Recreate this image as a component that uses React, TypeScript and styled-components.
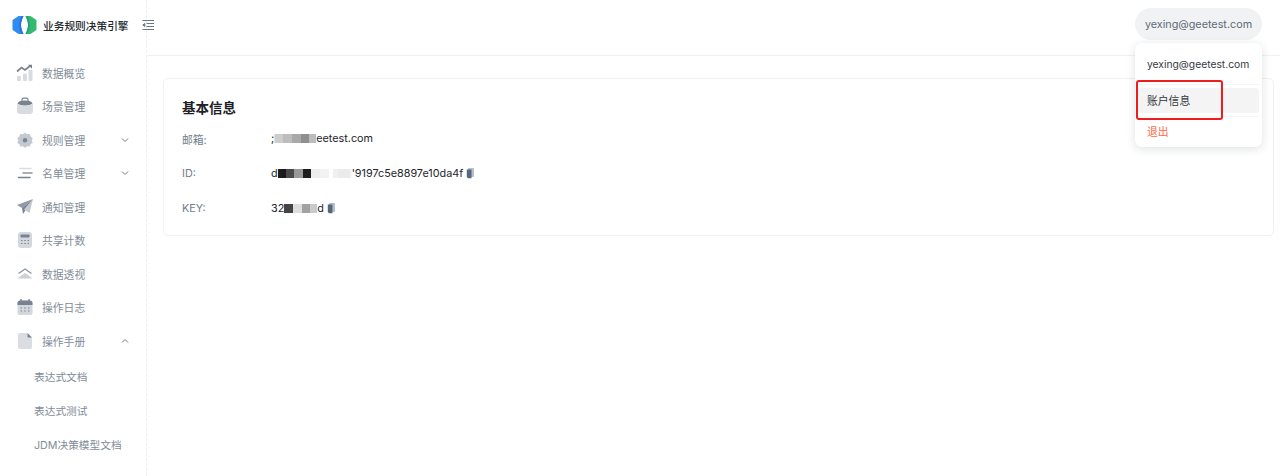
import React from "react";
import styled, { createGlobalStyle } from "styled-components";

const GlobalStyle = createGlobalStyle`
  html, body { margin: 0; padding: 0; background: #fff; }
  body { font-family: Inter, "Noto Sans CJK SC", sans-serif; color: #1f2329; }
`;

const Page = styled.div`
  display: flex;
  width: 1280px;
  height: 476px;
  overflow: hidden;
  position: relative;
`;

const Sidebar = styled.aside`
  width: 146px;
  flex-shrink: 0;
  border-right: 1px dashed #eceef0;
  display: flex;
  flex-direction: column;
`;

const Brand = styled.div`
  display: flex;
  align-items: center;
  height: 50px;
  padding-left: 12px;

  svg {
    flex-shrink: 0;
  }
`;

const BrandName = styled.span`
  margin-left: 6px;
  font-size: 10.7px;
  font-weight: 500;
  color: #23282f;
  white-space: nowrap;
`;

const CollapseBtn = styled.span`
  display: flex;
  margin-left: 13px;
  flex-shrink: 0;
`;

const Menu = styled.nav`
  display: flex;
  flex-direction: column;
  padding-top: 6px;
`;

const MenuItem = styled.div`
  display: flex;
  align-items: center;
  height: 33.5px;
  padding-left: 16px;
  padding-right: 17px;
`;

const IconSlot = styled.span`
  width: 18px;
  height: 18px;
  display: flex;
  align-items: center;
  justify-content: center;
  flex-shrink: 0;
`;

const MenuLabel = styled.span`
  margin-left: 8px;
  flex: 1;
  font-size: 10.8px;
  color: #818c98;
  white-space: nowrap;
`;

const SubMenu = styled.div`
  display: flex;
  flex-direction: column;
  padding-top: 2px;
`;

const SubItem = styled.div`
  height: 34px;
  display: flex;
  align-items: center;
  padding-left: 34px;
  font-size: 10.7px;
  color: #818c98;
  white-space: nowrap;
`;

const Main = styled.main`
  flex: 1;
  display: flex;
  flex-direction: column;
  min-width: 0;
`;

const Header = styled.header`
  height: 56px;
  box-sizing: border-box;
  border-bottom: 1px solid #f0f1f2;
  display: flex;
  justify-content: flex-end;
  padding: 8px 18px 0 0;
`;

const UserPill = styled.div`
  height: 32px;
  width: 127px;
  border-radius: 16px;
  background: #f0f2f4;
  color: #5f6b78;
  font-size: 10.8px;
  display: flex;
  align-items: center;
  justify-content: center;
`;

const Content = styled.div`
  padding: 22px 6px 0 16px;
`;

const Card = styled.section`
  height: 158px;
  box-sizing: border-box;
  border: 1px solid #f0f1f2;
  border-radius: 5px;
  padding: 20px 18px 0;
`;

const CardTitle = styled.h2`
  margin: 0 0 4px;
  font-size: 13.5px;
  line-height: 18px;
  font-weight: 600;
  color: #1d2127;
`;

const InfoRow = styled.div`
  display: flex;
  align-items: center;
  height: 35px;
  font-size: 10.8px;
`;

const InfoLabel = styled.span`
  width: 89px;
  color: #727d89;
`;

const InfoValue = styled.span`
  display: flex;
  align-items: center;
  color: #22262c;
  white-space: nowrap;
`;

const Mosaic = styled.span<{ $shade: string; $w: number }>`
  display: inline-block;
  width: ${({ $w }) => $w}px;
  height: 9px;
  background: ${({ $shade }) => $shade};
`;

const CopyIcon = styled.svg`
  margin-left: 3px;
`;

const Dropdown = styled.div`
  position: absolute;
  left: 1135px;
  top: 43px;
  width: 127px;
  height: 104px;
  background: #fff;
  border-radius: 7px;
  box-shadow: 0 2px 10px rgba(30, 40, 55, 0.14);
  display: flex;
  flex-direction: column;
  padding: 0 3px;
  box-sizing: border-box;
  font-size: 10.3px;
`;

const DropEmail = styled.div`
  height: 41px;
  display: flex;
  align-items: center;
  padding-left: 9px;
  color: #343a42;
  border-bottom: 1px solid #f5f5f6;
`;

const DropItem = styled.div`
  margin-top: 3px;
  height: 25px;
  display: flex;
  align-items: center;
  padding: 0 0 1px 9px;
  box-sizing: border-box;
  background: #f4f4f4;
  border-radius: 3px;
  font-size: 10.8px;
  color: #33383f;
`;

const DropDanger = styled.div`
  margin-top: 3px;
  border-top: 1px solid #f5f5f6;
  height: 28px;
  display: flex;
  align-items: center;
  padding-left: 9px;
  font-size: 10.8px;
  color: #ff6a45;
`;

const Highlight = styled.div`
  position: absolute;
  left: 1136px;
  top: 80px;
  width: 87px;
  height: 40px;
  box-sizing: border-box;
  border: 2px solid #ee1c1c;
  border-radius: 3px;
`;

const Logo = () => (
  <svg width="25" height="20" viewBox="0 0 25 20">
    <path d="M6.5 1 H11.5 C10 4 9 7 9 10 C9 13 10 16 11.5 19 H6.5 L1 15.2 C0.6 14.9 0.5 14.6 0.5 14 V6 C0.5 5.4 0.6 5.1 1 4.8 Z" fill="#2f8df2" />
    <path d="M11.5 1 C10 4 9 7 9 10 C9 13 10 16 11.5 19 H9.5 C8 16 7.2 13 7.2 10 C7.2 7 8 4 9.5 1 Z" fill="#2a6fe0" />
    <path d="M13.5 1 H18.5 L24 4.8 C24.4 5.1 24.5 5.4 24.5 6 V14 C24.5 14.6 24.4 14.9 24 15.2 L18.5 19 H13.5 C15 16 16 13 16 10 C16 7 15 4 13.5 1 Z" fill="#34b96f" />
    <path d="M13.5 1 C15 4 16 7 16 10 C16 13 15 16 13.5 19 H15.5 C17 16 17.8 13 17.8 10 C17.8 7 17 4 15.5 1 Z" fill="#1fa184" />
  </svg>
);

const Collapse = () => (
  <svg width="12" height="12" viewBox="0 0 12 12" fill="none" stroke="#6b7683" strokeWidth="1">
    <path d="M0.5 1.5H12M4.5 4.5H12M4.5 7.5H12M0.5 10.5H12" />
    <path d="M2.8 4.5L0.8 6L2.8 7.5Z" fill="#6b7683" />
  </svg>
);

const Chevron = ({ up }: { up?: boolean }) => (
  <svg width="8" height="6" viewBox="0 0 8 6" fill="none" stroke="#6f7a87" strokeWidth="1">
    <path d={up ? "M1 4.5L4 1.5L7 4.5" : "M1 1.5L4 4.5L7 1.5"} />
  </svg>
);

const Overview = () => (
  <svg width="18" height="18" viewBox="0 0 18 18">
    <path d="M1 7.5L5.5 3.5L9 6L14 2" fill="none" stroke="#78838f" strokeWidth="1.7" />
    <path d="M12 0.8H16V4.8Z" fill="#78838f" />
    <rect x="1" y="12" width="4" height="5" rx="1" fill="#d8dce1" />
    <rect x="7" y="9.5" width="4" height="7.5" rx="1" fill="#d8dce1" />
    <rect x="12.5" y="6" width="4" height="11" rx="1" fill="#d8dce1" />
  </svg>
);

const Scene = () => (
  <svg width="18" height="18" viewBox="0 0 18 18">
    <path d="M1 6.5C4 9.5 14 9.5 17 6.5V14C17 15.6 15.8 17 14 17H4C2.2 17 1 15.6 1 14Z" fill="#d8dce1" />
    <path d="M1.5 6.5C2 4.6 4.5 3.5 9 3.5C13.5 3.5 16 4.6 16.5 6.5C14 9 4 9 1.5 6.5Z" fill="#78838f" />
    <path d="M6 4V2.8C6 1.8 6.7 1.2 7.5 1.2H10.5C11.3 1.2 12 1.8 12 2.8V4" fill="none" stroke="#78838f" strokeWidth="1.2" />
  </svg>
);

const Gear = () => (
  <svg width="18" height="18" viewBox="0 0 18 18">
    <path d="M9 1.5L11 3.2L13.8 3L14.6 5.5L16.7 7L15.8 9.5L16.7 12L14.6 13L13.8 15.5L11 15.3L9 17L7 15.3L4.2 15.5L3.4 13L1.3 12L2.2 9.5L1.3 7L3.4 5.5L4.2 3L7 3.2Z" fill="#c3c9d0" />
    <circle cx="9" cy="9.3" r="2.2" fill="#78838f" />
  </svg>
);

const ListIcon = () => (
  <svg width="18" height="18" viewBox="0 0 18 18" fill="none" strokeLinecap="round">
    <path d="M4 4.5H15" stroke="#d8dce1" strokeWidth="1.5" />
    <path d="M7 9H16" stroke="#8a949f" strokeWidth="1.5" />
    <path d="M2.5 13.5H14" stroke="#78838f" strokeWidth="1.5" />
  </svg>
);

const Plane = () => (
  <svg width="18" height="18" viewBox="0 0 18 18">
    <path d="M17 1L1 7L6 10Z" fill="#8f99a4" />
    <path d="M17 1L6 10L7 16Z" fill="#78838f" />
    <path d="M17 1L8 11.5L13.5 15Z" fill="#c3c9d0" />
  </svg>
);

const Calculator = () => (
  <svg width="18" height="18" viewBox="0 0 18 18">
    <rect x="2" y="1" width="14" height="16" rx="3" fill="#d3d8de" />
    <rect x="4.5" y="3.5" width="9" height="3" rx="0.7" fill="#78838f" />
    <path d="M5 9.5H6.4M8.3 9.5H9.7M11.6 9.5H13M5 12.5H6.4M8.3 12.5H9.7M11.6 12.5H13" stroke="#78838f" strokeWidth="1.2" />
  </svg>
);

const Perspective = () => (
  <svg width="18" height="18" viewBox="0 0 18 18">
    <path d="M2.5 8.5L9 4L15.5 8.5" fill="none" stroke="#8a949f" strokeWidth="1.2" />
    <path d="M9 8L15.5 12.5C15.8 13 15.5 13.5 15 13.5H3C2.5 13.5 2.2 13 2.5 12.5Z" fill="#ccd1d7" />
  </svg>
);

const Calendar = () => (
  <svg width="18" height="18" viewBox="0 0 18 18">
    <rect x="1.5" y="2.5" width="15" height="14.5" rx="2.5" fill="#d3d8de" />
    <path d="M1.5 7V5C1.5 3.6 2.6 2.5 4 2.5H14C15.4 2.5 16.5 3.6 16.5 5V7Z" fill="#78838f" />
    <path d="M5 1V3.5M13 1V3.5" stroke="#78838f" strokeWidth="1.3" />
    <path d="M4.5 10H6M8.2 10H9.7M12 10H13.5M4.5 13H6M8.2 13H9.7M12 13H13.5" stroke="#78838f" strokeWidth="1" />
  </svg>
);

const Doc = () => (
  <svg width="18" height="18" viewBox="0 0 18 18">
    <path d="M4 1H11L16 6V15C16 16.2 15.2 17 14 17H4C2.8 17 2 16.2 2 15V3C2 1.8 2.8 1 4 1Z" fill="#dadee3" />
    <path d="M11.5 1L16 5.5H12.5C11.9 5.5 11.5 5.1 11.5 4.5Z" fill="#78838f" />
  </svg>
);

const Copy = () => (
  <CopyIcon width="8" height="11" viewBox="0 0 8 11">
    <rect x="2" y="0" width="6" height="9" rx="0.8" fill="#b5c0cb" />
    <path d="M0.8 1.5H5.5V10.2H2L0.8 9Z" fill="#54687e" />
  </CopyIcon>
);

const menuItems = [
  { label: "数据概览", icon: <Overview /> },
  { label: "场景管理", icon: <Scene /> },
  { label: "规则管理", icon: <Gear />, chevron: "down" },
  { label: "名单管理", icon: <ListIcon />, chevron: "down" },
  { label: "通知管理", icon: <Plane /> },
  { label: "共享计数", icon: <Calculator /> },
  { label: "数据透视", icon: <Perspective /> },
  { label: "操作日志", icon: <Calendar /> },
  { label: "操作手册", icon: <Doc />, chevron: "up" },
];

const subItems = ["表达式文档", "表达式测试", "JDM决策模型文档"];

const mosaics: Record<string, [string, number][]> = {
  mail: [["#e4e4e4", 1], ["#cdcdcd", 8], ["#bdbdbd", 9], ["#a9a9a9", 9], ["#8f8f8f", 8], ["#bcbcbc", 7]],
  id: [["#1e1e1e", 4], ["#1a1a1a", 4], ["#4a4a4a", 8], ["#999", 9], ["#1e1e1e", 8], ["#ededed", 9], ["#f3f3f3", 9], ["#fff", 4], ["#f0f0f0", 5], ["#ebebeb", 12], ["#f6f6f6", 2]],
  key: [["#444", 9], ["#dedede", 9], ["#a2a2a2", 8], ["#cacaca", 7]],
};

const Blur = ({ name }: { name: string }) => (
  <>
    {mosaics[name].map(([shade, w], i) => (
      <Mosaic key={i} $shade={shade} $w={w} />
    ))}
  </>
);

export default function App() {
  return (
    <Page>
      <GlobalStyle />
      <Sidebar>
        <Brand>
          <Logo />
          <BrandName>业务规则决策引擎</BrandName>
          <CollapseBtn>
            <Collapse />
          </CollapseBtn>
        </Brand>
        <Menu>
          {menuItems.map((item) => (
            <MenuItem key={item.label}>
              <IconSlot>{item.icon}</IconSlot>
              <MenuLabel>{item.label}</MenuLabel>
              {item.chevron && <Chevron up={item.chevron === "up"} />}
            </MenuItem>
          ))}
          <SubMenu>
            {subItems.map((label) => (
              <SubItem key={label}>{label}</SubItem>
            ))}
          </SubMenu>
        </Menu>
      </Sidebar>
      <Main>
        <Header>
          <UserPill>yexing@geetest.com</UserPill>
        </Header>
        <Content>
          <Card>
            <CardTitle>基本信息</CardTitle>
            <InfoRow>
              <InfoLabel>邮箱:</InfoLabel>
              <InfoValue>
                ;<Blur name="mail" />eetest.com
              </InfoValue>
            </InfoRow>
            <InfoRow>
              <InfoLabel>ID:</InfoLabel>
              <InfoValue>
                d<Blur name="id" />'9197c5e8897e10da4f
                <Copy />
              </InfoValue>
            </InfoRow>
            <InfoRow>
              <InfoLabel>KEY:</InfoLabel>
              <InfoValue>
                32<Blur name="key" />d
                <Copy />
              </InfoValue>
            </InfoRow>
          </Card>
        </Content>
      </Main>
      <Dropdown>
        <DropEmail>yexing@geetest.com</DropEmail>
        <DropItem>账户信息</DropItem>
        <DropDanger>退出</DropDanger>
      </Dropdown>
      <Highlight />
    </Page>
  );
}
